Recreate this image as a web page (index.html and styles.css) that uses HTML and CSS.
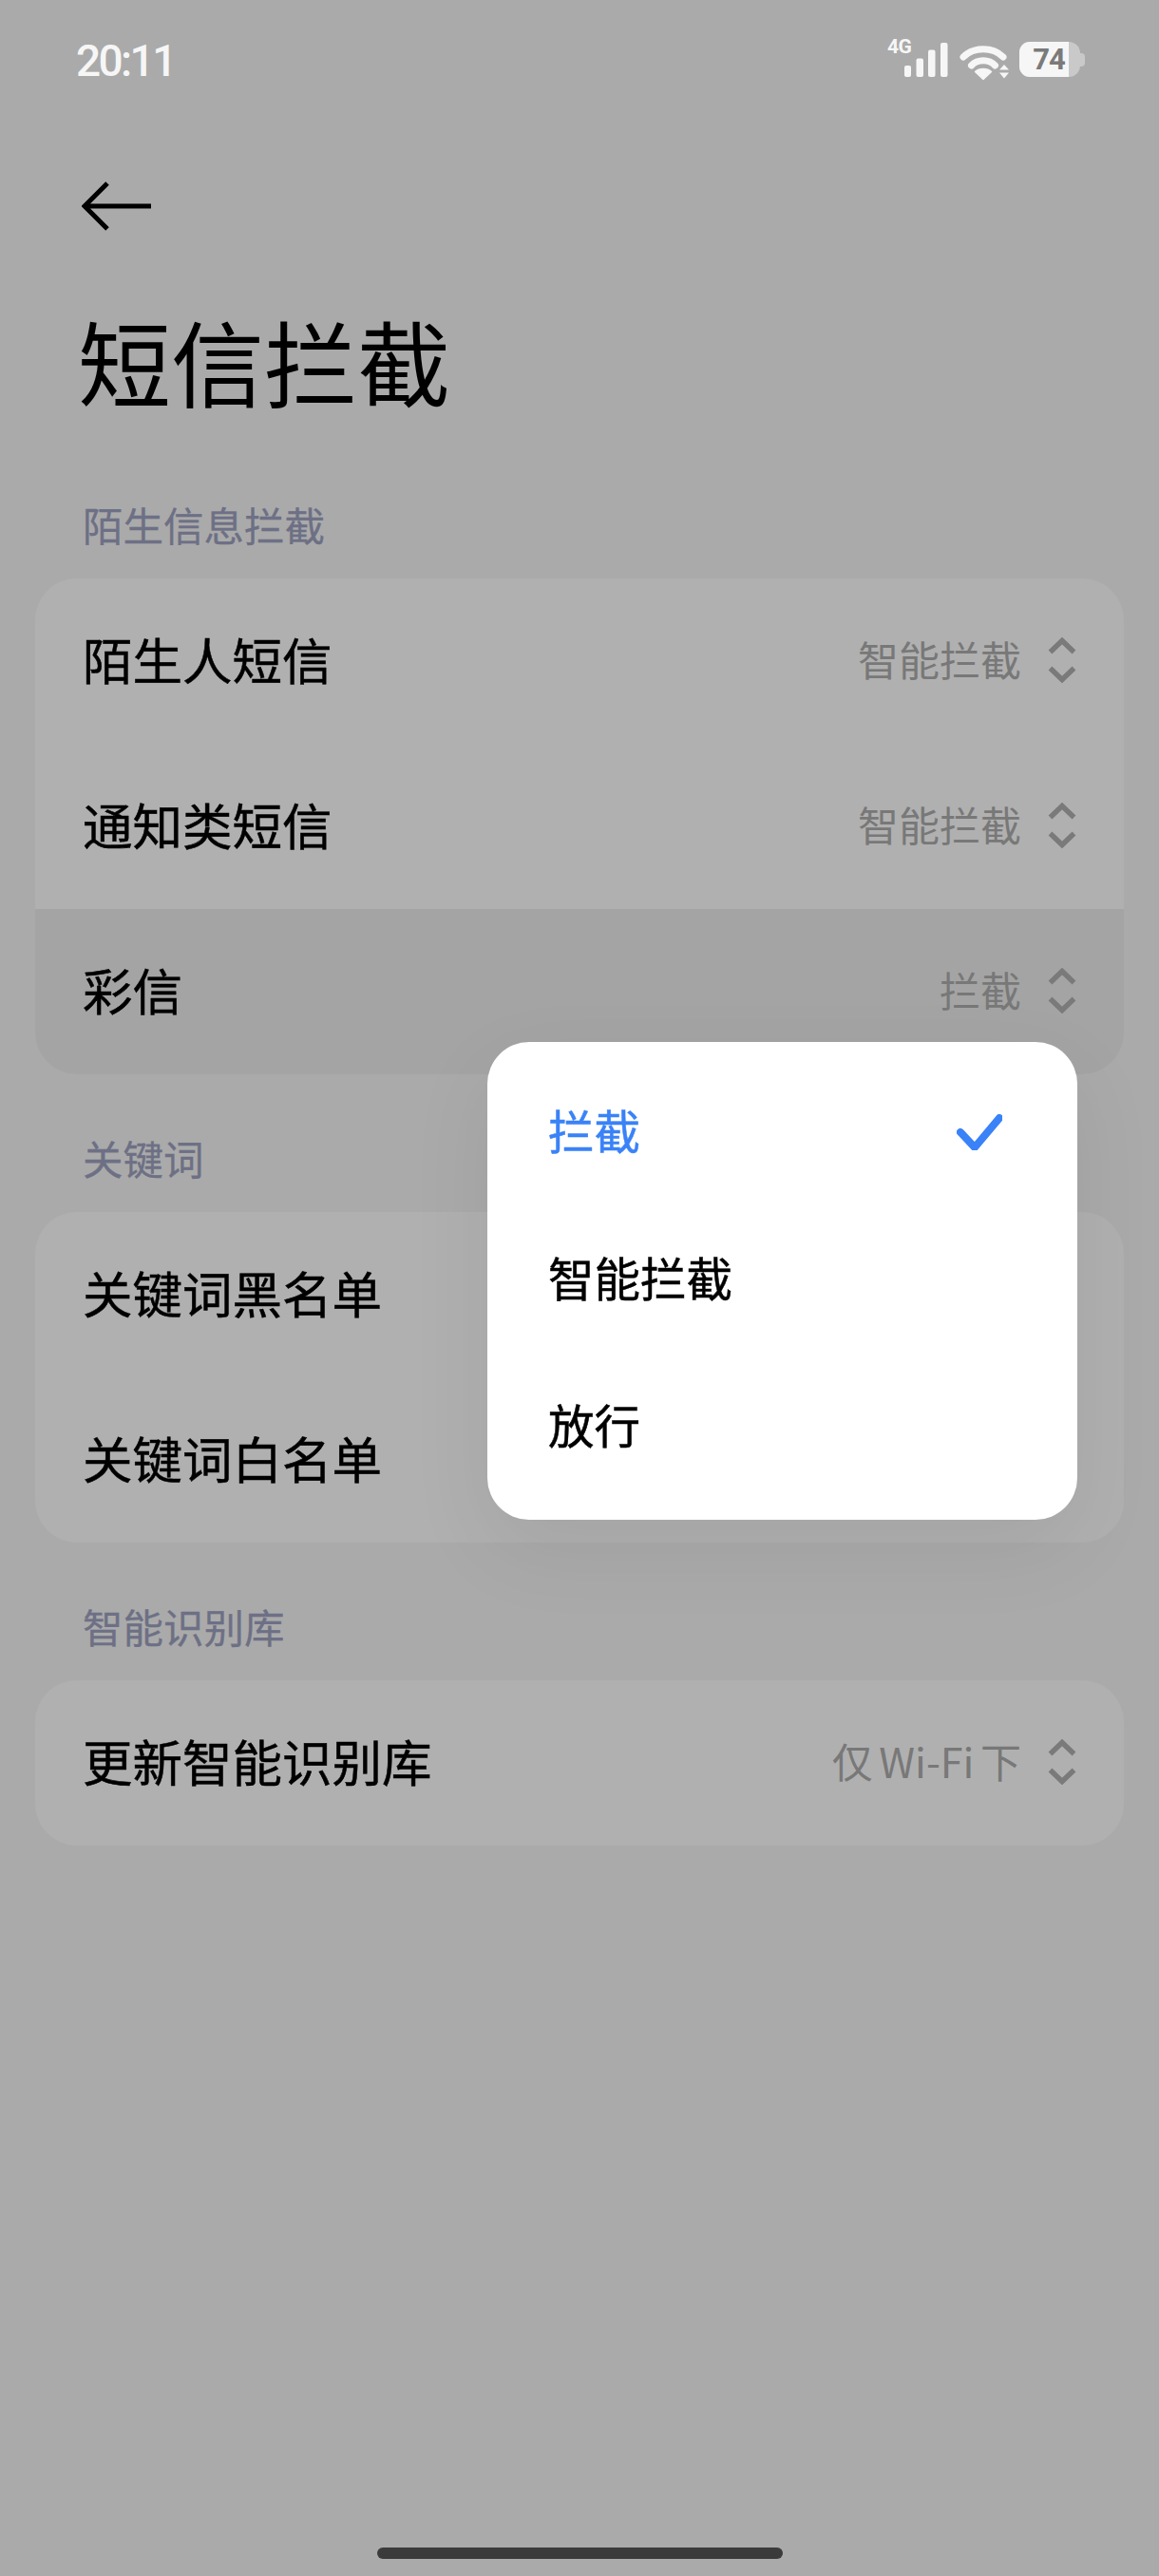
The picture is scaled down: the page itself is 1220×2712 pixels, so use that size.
FILE: index.html
```html
<!DOCTYPE html>
<html lang="zh-CN">
<head>
<meta charset="utf-8">
<title>短信拦截</title>
<link rel="stylesheet" href="styles.css">
</head>
<body>
<svg class="defs" width="0" height="0" aria-hidden="true">
  <symbol id="updown" viewBox="0 0 30 48">
    <path d="M2.5 15.5 15 3.500 27.500 15.500M2.500 32.500 15 44.500 27.500 32.500" fill="none" stroke="#7a7a7a" stroke-width="5.500" stroke-linejoin="miter"/>
  </symbol>
</svg>
<div class="page">
  <div class="status">
    <span class="time">20:11</span>
    <div class="status-icons">
      <svg class="signal" width="62" height="40" viewBox="0 0 62 40">
        <text class="net" x="-1" y="14">4G</text>
        <rect x="17" y="27" width="7" height="12" rx="2" fill="#f6f6f6"/>
        <rect x="29.5" y="19.5" width="7.5" height="19.5" rx="2" fill="#f6f6f6"/>
        <rect x="42" y="10.5" width="7.5" height="28.5" rx="2" fill="#f6f6f6"/>
        <rect x="55" y="3" width="7.5" height="36" rx="2" fill="#f6f6f6"/>
      </svg>
      <svg class="wifi" width="51" height="38" viewBox="0 0 51 38">
        <path d="M3 14C14 3 34 3 45 14" fill="none" stroke="#f6f6f6" stroke-width="7" stroke-linecap="round"/>
        <path d="M11.5 23C18 16 30 16 36.5 23" fill="none" stroke="#f6f6f6" stroke-width="7" stroke-linecap="round"/>
        <path d="M15.5 29.500C20 25.500 28 25.500 32.500 29.500L24 37.500Z" fill="#f6f6f6" stroke="#f6f6f6" stroke-width="1.500" stroke-linejoin="round"/>
        <path d="M41 27.500 46 22 51 27.500ZM41 30.500H51L46 36.500Z" fill="#f6f6f6"/>
      </svg>
      <div class="battery">
        <div class="battery-shell"><div class="battery-fill">74</div></div>
        <div class="battery-nub"></div>
      </div>
    </div>
  </div>

  <svg class="back" width="74" height="52" viewBox="0 0 74 52">
    <path d="M27 2 3 26 27 50M3 26H73" fill="none" stroke="#000" stroke-width="5"/>
  </svg>

  <h1 class="title">短信拦截</h1>

  <div class="section-label first">陌生信息拦截</div>
  <div class="card">
    <div class="row"><span class="row-title">陌生人短信</span><span class="row-right"><span class="value">智能拦截</span><svg class="updown"><use href="#updown"/></svg></span></div>
    <div class="row"><span class="row-title">通知类短信</span><span class="row-right"><span class="value">智能拦截</span><svg class="updown"><use href="#updown"/></svg></span></div>
    <div class="row selected"><span class="row-title">彩信</span><span class="row-right"><span class="value">拦截</span><svg class="updown"><use href="#updown"/></svg></span></div>
  </div>

  <div class="section-label">关键词</div>
  <div class="card">
    <div class="row"><span class="row-title">关键词黑名单</span></div>
    <div class="row"><span class="row-title">关键词白名单</span></div>
  </div>

  <div class="section-label">智能识别库</div>
  <div class="card">
    <div class="row"><span class="row-title">更新智能识别库</span><span class="row-right"><span class="value">仅 Wi-Fi 下</span><svg class="updown"><use href="#updown"/></svg></span></div>
  </div>

  <div class="home-bar"></div>

  <div class="menu">
    <div class="menu-item active"><span>拦截</span>
      <svg class="check" width="48" height="38" viewBox="0 0 48 38"><path d="M4 19 19 35 45 4" fill="none" stroke="#3a82f7" stroke-width="8" stroke-linecap="round" stroke-linejoin="round"/></svg>
    </div>
    <div class="menu-item"><span>智能拦截</span></div>
    <div class="menu-item"><span>放行</span></div>
  </div>
</div>
</body>
</html>
```
FILE: styles.css
```css
* { box-sizing: border-box; }
html, body { margin: 0; padding: 0; }
body {
  width: 1220px;
  height: 2712px;
  overflow: hidden;
  background: #aaaaaa;
  font-family: "Noto Sans CJK SC", "Noto Sans", sans-serif;
}
.defs { position: absolute; }
.page {
  position: relative;
  width: 1220px;
  height: 2712px;
  display: flex;
  flex-direction: column;
  background: #aaaaaa;
}
.status {
  height: 100px;
  flex: none;
  display: flex;
  justify-content: space-between;
  padding: 42px 78px 0 80px;
}
.time {
  font-family: Roboto, "Noto Sans", sans-serif;
  font-weight: 500;
  font-size: 46px;
  line-height: 44px;
  letter-spacing: -2.6px;
  color: #f6f6f6;
}
.status-icons {
  display: flex;
  align-items: flex-start;
  height: 42px;
}
.signal { margin-right: 14px; overflow: visible; }
.net {
  font-family: Roboto, sans-serif;
  font-weight: 700;
  font-size: 21px;
  letter-spacing: -0.5px;
  fill: #f6f6f6;
}
.wifi { margin: 4px 11px 0 0; overflow: visible; }
.battery {
  display: flex;
  align-items: center;
  margin-top: 2px;
}
.battery-shell {
  width: 64px;
  height: 37px;
  background: #c9c9c9;
  border-radius: 11px 12px 12px 11px;
  overflow: hidden;
}
.battery-fill {
  width: 52px;
  height: 37px;
  padding-left: 10px;
  background: #f6f6f6;
  color: #7a7a7a;
  font-family: Roboto, sans-serif;
  font-weight: 700;
  font-size: 31px;
  letter-spacing: -1px;
  line-height: 37px;
  text-align: center;
}
.battery-nub {
  width: 5px;
  height: 14px;
  background: #c9c9c9;
  border-radius: 0 4px 4px 0;
}
.back {
  flex: none;
  display: block;
  margin: 91px 0 0 86px;
}
.title {
  flex: none;
  margin: 75px 0 3px 82px;
  height: 120px;
  font-weight: 400;
  font-size: 98px;
  line-height: 120px;
  color: #000;
}
.section-label {
  flex: none;
  height: 56px;
  margin: 62px 0 27px 87px;
  font-size: 42.5px;
  line-height: 52px;
  -webkit-text-stroke: 0.3px #6d7085;
  color: #6d7085;
}
.section-label.first { margin-top: 85px; }
.card {
  flex: none;
  margin: 0 37px;
  background: #b0b0b0;
  border-radius: 44px;
  overflow: hidden;
}
.row {
  height: 174px;
  padding: 0 50px 0 50px;
  display: flex;
  align-items: center;
  justify-content: space-between;
}
.row.selected { background: #a4a4a4; }
.row-title {
  margin-top: -7px;
  font-size: 52.500px;
  font-weight: 400;
  -webkit-text-stroke: 0.5px #000;
  color: #000;
}
.row-right {
  display: flex;
  align-items: center;
  gap: 28px;
  margin-top: -2px;
}
.value {
  margin-top: -5px;
  font-size: 43px;
  font-weight: 400;
  word-spacing: -3px;
  color: #787878;
}
.updown {
  display: block;
  width: 30px;
  height: 48px;
}
.home-bar {
  flex: none;
  width: 427px;
  height: 12px;
  margin: auto auto 18px;
  background: #3b3b3b;
  border-radius: 6px;
}
.menu {
  position: absolute;
  left: 513px;
  top: 1097px;
  width: 621px;
  height: 503px;
  padding: 18px 0;
  background: #ffffff;
  border-radius: 44px;
  box-shadow: 0 30px 90px rgba(0, 0, 0, 0.07);
}
.menu-item {
  height: 155px;
  padding: 0 79px 0 64px;
  display: flex;
  align-items: center;
  justify-content: space-between;
  font-size: 48.500px;
  color: #000;
}
.menu-item span {
  margin-top: -7px;
  font-weight: 400;
  -webkit-text-stroke: 0.5px currentColor;
}
.menu-item.active { color: #3a82f7; }
.check { display: block; margin-top: -2px; }
```
